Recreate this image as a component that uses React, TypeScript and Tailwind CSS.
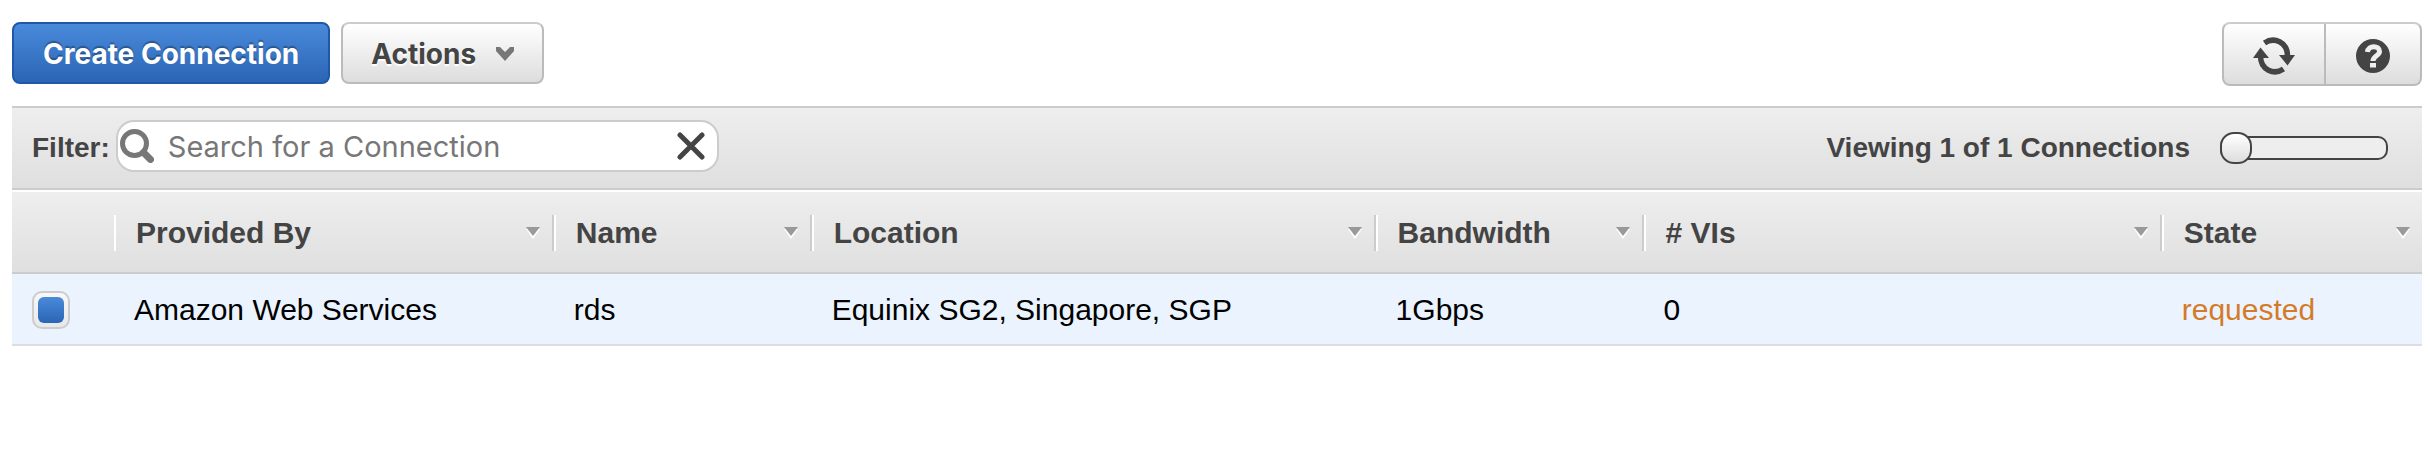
import { useState } from "react"

interface Column {
  label: string
  width: string
}

const columns: Column[] = [
  { label: "Provided By", width: "w-[18.25%]" },
  { label: "Name", width: "w-[10.7%]" },
  { label: "Location", width: "w-[23.4%]" },
  { label: "Bandwidth", width: "w-[11.12%]" },
  { label: "# VIs", width: "w-[21.5%]" },
  { label: "State", width: "w-auto" },
]

function RefreshIcon() {
  return (
    <svg viewBox="0 0 42 38" className="w-[42px] h-[38px]" fill="none" stroke="#444" strokeWidth="5.5">
      <path d="M11.500 6C21 -0.5 34.500 5 34.500 19" />
      <path d="M30.500 32C21 38.500 7.500 33 7.500 19" />
      <path d="M26 18H42L34.500 28.500Z" fill="#444" stroke="none" />
      <path d="M0 21H16L7.500 10.500Z" fill="#444" stroke="none" />
    </svg>
  )
}

function HelpIcon() {
  return (
    <svg viewBox="0 0 34 34" className="size-[34px]" fill="none">
      <circle cx="17" cy="17" r="17" fill="#444" />
      <path d="M11.500 13C12 6 23.500 6 23.500 12.500C23.500 17 17 16.500 17 22" stroke="#eee" strokeWidth="5" />
      <path d="M14 24H20V28.500H14Z" fill="#eee" />
    </svg>
  )
}

function SortArrow() {
  return (
    <svg viewBox="0 0 14 12" className="w-[14px] h-3 shrink-0">
      <path d="M0 2H14L7 12Z" fill="#fff" />
      <path d="M0 0H14L7 9Z" fill="#999" />
    </svg>
  )
}

export default function App() {
  const [query, setQuery] = useState("")
  const [selected, setSelected] = useState(true)
  const [page, setPage] = useState(0)

  return (
    <div className="min-h-screen bg-white pl-3 pr-2 pt-[22px] font-['Liberation_Sans',Arial,sans-serif] text-[28px] leading-8 text-[#444]">
      {/* Toolbar */}
      <div className="flex items-start justify-between pb-5">
        <div className="flex gap-[11px] font-['Inter',sans-serif]">
          <button className="h-[62px] px-[29px] pt-[2px] rounded-lg border-2 border-[#1f58a7] bg-linear-to-b from-[#4a8adb] to-[#2b65b5] font-bold text-white [text-shadow:0_-2px_1px_rgba(0,0,0,0.3)]">
            Create Connection
          </button>
          <button className="flex h-[62px] items-center gap-5 px-7 pt-[2px] rounded-lg border-2 border-[#bbb] border-t-[#ccc] bg-linear-to-b from-white to-[#ddd] font-bold [text-shadow:0_2px_1px_#fff]">
            Actions
            <svg viewBox="0 0 18 14" className="w-[18px] h-[14px]">
              <path d="M0 0H4L9 5L14 0H18V4L9 14L0 4Z" fill="#777" />
            </svg>
          </button>
        </div>
        <div className="flex h-16 rounded-lg border-2 border-[#bbb] border-t-[#ccc] bg-linear-to-b from-white to-[#ddd]">
          <button aria-label="Refresh" className="flex w-[102px] items-center justify-center pt-1 border-r-2 border-[#bbb]">
            <RefreshIcon />
          </button>
          <button aria-label="Help" className="flex w-[94px] items-center justify-center pt-1">
            <HelpIcon />
          </button>
        </div>
      </div>

      {/* Filter bar */}
      <div className="flex h-[84px] items-center justify-between border-y-2 border-[#ccc] bg-linear-to-b from-[#eee] to-[#dfdfdf] pl-5 pr-[34px]">
        <div className="flex items-center gap-[6px]">
          <label htmlFor="filter" className="font-bold">Filter:</label>
          <div className="mb-1 flex h-[52px] w-[603px] items-center rounded-[18px] border-2 border-[#ccc] bg-white pl-[2px] pr-3">
            <svg viewBox="0 0 34 34" className="size-[34px] shrink-0" fill="none" stroke="#777">
              <circle cx="14.500" cy="14.500" r="12" strokeWidth="5" />
              <path d="M23.500 23.500L30.500 30.500" strokeWidth="7" strokeLinecap="round" />
            </svg>
            <input
              id="filter"
              type="text"
              value={query}
              onChange={(e) => setQuery(e.target.value)}
              placeholder="Search for a Connection"
              className="min-w-0 flex-1 bg-transparent pl-[14px] pt-[2px] font-['Inter',sans-serif] text-[29px] outline-none placeholder:text-[#777]"
            />
            <button aria-label="Clear filter" onClick={() => setQuery("")} className="shrink-0">
              <svg viewBox="0 0 28 28" className="size-7" stroke="#444" strokeWidth="5" strokeLinecap="round">
                <path d="M3 3L25 25M25 3L3 25" />
              </svg>
            </button>
          </div>
        </div>
        <div className="flex items-center gap-[30px]">
          <label htmlFor="page" className="font-bold">Viewing 1 of 1 Connections</label>
          <input
            id="page"
            type="range"
            min={0}
            max={10}
            value={page}
            onChange={(e) => setPage(Number(e.target.value))}
            className="h-6 w-[168px] appearance-none rounded-[10px] border-2 border-[#444] bg-[#eee] [&::-webkit-slider-thumb]:-ml-[2px] [&::-webkit-slider-thumb]:size-8 [&::-webkit-slider-thumb]:appearance-none [&::-webkit-slider-thumb]:rounded-[14px] [&::-webkit-slider-thumb]:border-2 [&::-webkit-slider-thumb]:border-[#444] [&::-webkit-slider-thumb]:bg-linear-to-b [&::-webkit-slider-thumb]:from-white [&::-webkit-slider-thumb]:to-[#ddd]"
          />
        </div>
      </div>

      {/* Connections */}
      <table className="mt-[2px] w-full table-fixed border-collapse text-left text-[30px]">
        <thead>
          <tr className="h-[82px] bg-linear-to-b from-[#eee] to-[#dfdfdf] shadow-[inset_0_-2px_0_#ccc]">
            <th className="w-[102px] p-0" />
            {columns.map((col, i) => (
              <th key={col.label} className={`${col.width} p-0`}>
                <div
                  className={`flex h-9 items-center justify-between border-l-2 border-l-white pl-5 pr-3 ${
                    i < columns.length - 1 ? "border-r-2 border-r-[#ccc]" : ""
                  }`}
                >
                  {col.label}
                  <SortArrow />
                </div>
              </th>
            ))}
          </tr>
        </thead>
        <tbody className="text-black">
          <tr className="h-[72px] bg-[#eaf3fe] shadow-[inset_0_-2px_0_#ddd]">
            <td className="p-0 pl-5">
              <input
                type="checkbox"
                aria-label="Select rds"
                checked={selected}
                onChange={(e) => setSelected(e.target.checked)}
                className="block size-[38px] appearance-none rounded-[10px] border-2 border-[#ccc] bg-linear-to-b from-[#f8f8f8] to-[#e8e8e8] p-1 before:block before:size-full before:rounded-md checked:before:bg-linear-to-b checked:before:from-[#4a8adb] checked:before:to-[#2b65b5]"
              />
            </td>
            <td className="p-0 pl-5">Amazon Web Services</td>
            <td className="p-0 pl-5">rds</td>
            <td className="p-0 pl-5">Equinix SG2, Singapore, SGP</td>
            <td className="p-0 pl-5">1Gbps</td>
            <td className="p-0 pl-5">0</td>
            <td className="p-0 pl-5 text-[#d47b2a]">requested</td>
          </tr>
        </tbody>
      </table>
    </div>
  )
}
